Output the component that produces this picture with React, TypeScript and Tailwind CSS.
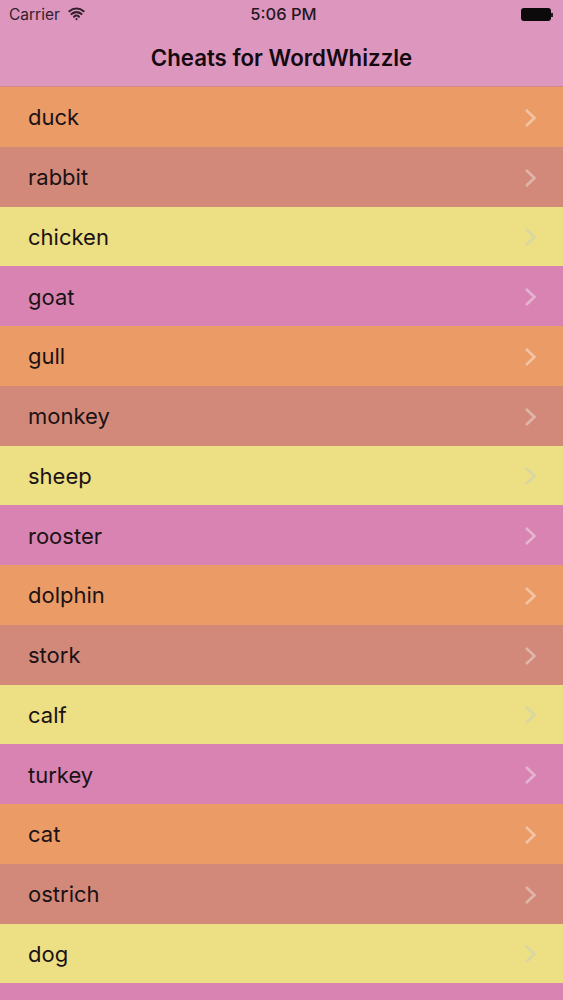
import { Wifi } from "lucide-react";

const words = [
  "duck",
  "rabbit",
  "chicken",
  "goat",
  "gull",
  "monkey",
  "sheep",
  "rooster",
  "dolphin",
  "stork",
  "calf",
  "turkey",
  "cat",
  "ostrich",
  "dog",
  "",
];

const rowColors = ["bg-[#eb9b65]", "bg-[#d2897a]", "bg-[#ecdf84]", "bg-[#d883b2]"];
const chevronColors = ["text-[#f2c4a4]", "text-[#e0b5ac]", "text-[#d9d6a6]", "text-[#e6b4d0]"];

function Chevron({ className }: { className: string }) {
  return (
    <svg width="13" height="20" viewBox="0 0 13 20" fill="none" className={className}>
      <path d="M2 2l8.5 8L2 18" stroke="currentColor" strokeWidth="2.6" />
    </svg>
  );
}

export default function App() {
  return (
    <div className="w-[563px] h-[1000px] overflow-hidden bg-[#d883b2] font-['Inter',sans-serif] text-[#1a1215]">
      <header className="h-[87px] bg-[#dd96be] border-b border-[#d38a86]">
        <div className="flex items-center justify-between h-[29px] pl-[9px] pr-[10px] text-[15.5px]">
          <div className="flex flex-1 items-center gap-[8px] text-[#33202c]">
            <span>Carrier</span>
            <Wifi size={17} strokeWidth={3} className="-mt-[3px]" />
          </div>
          <span className="ml-[5px] font-medium text-[16.5px] text-[#26161f]">5:06 PM</span>
          <div className="flex flex-1 justify-end items-center">
            <div className="w-[30px] h-[13px] rounded-[3px] bg-[#0d0a0c]" />
            <div className="w-[2px] h-[4px] bg-[#2a1a24]" />
          </div>
        </div>
        <h1 className="mt-[2px] text-center text-[22.25px] leading-[54px] font-semibold text-[#14090f]">
          Cheats for WordWhizzle
        </h1>
      </header>
      <ul>
        {words.map((word, i) => (
          <li
            key={i}
            className={`flex items-center justify-between h-[59.75px] pl-[28px] pr-[26px] text-[22px] ${rowColors[i % 4]}`}
          >
            <span className="pt-[2px]">{word}</span>
            <Chevron className={`mt-[2px] ${chevronColors[i % 4]}`} />
          </li>
        ))}
      </ul>
    </div>
  );
}
